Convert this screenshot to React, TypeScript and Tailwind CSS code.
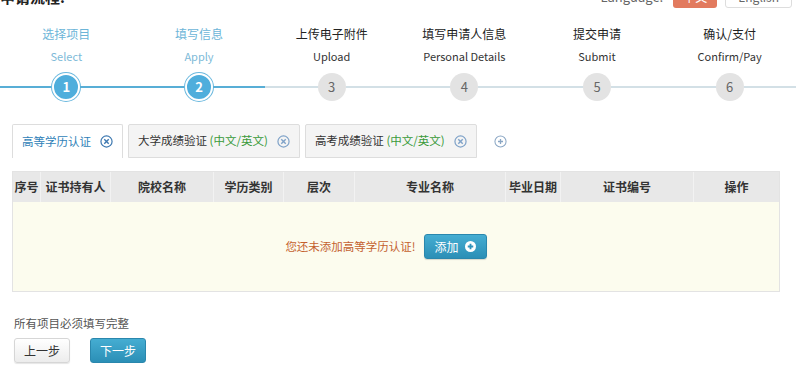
import React from 'react';

const steps = [
  { cn: '选择项目', en: 'Select', done: true },
  { cn: '填写信息', en: 'Apply', done: true },
  { cn: '上传电子附件', en: 'Upload', done: false },
  { cn: '填写申请人信息', en: 'Personal Details', done: false },
  { cn: '提交申请', en: 'Submit', done: false },
  { cn: '确认/支付', en: 'Confirm/Pay', done: false },
];

const columns = [
  { label: '序号', w: 'w-[28px]' },
  { label: '证书持有人', w: 'w-[70px]' },
  { label: '院校名称', w: 'w-[103px]' },
  { label: '学历类别', w: 'w-[70px]' },
  { label: '层次', w: 'w-[71px]' },
  { label: '专业名称', w: 'w-[151px]' },
  { label: '毕业日期', w: 'w-[55px]' },
  { label: '证书编号', w: 'w-[133px]' },
  { label: '操作', w: 'flex-1' },
];

function CloseIcon({ color }: { color: string }) {
  return (
    <svg width="13" height="13" viewBox="0 0 14 14" className="shrink-0">
      <circle cx="7" cy="7" r="6" fill="none" stroke={color} strokeWidth="1.3" />
      <path d="M4.6 4.6 L9.4 9.4 M9.4 4.6 L4.6 9.4" stroke={color} strokeWidth="1.5" />
    </svg>
  );
}

function Tab({ title, sub, active }: { title: string; sub?: string; active?: boolean }) {
  return (
    <div
      className={
        active
          ? 'h-[34px] flex items-center gap-[9px] px-[9px] border border-b-0 border-[#dddddd] bg-white rounded-t-[2px]'
          : 'h-[34px] flex items-center gap-[9px] px-[9px] border border-[#dddddd] bg-[#f4f4f4] rounded-t-[2px]'
      }
    >
      <span className={active ? 'text-[#2f7fb8] whitespace-nowrap' : 'text-[#333] whitespace-nowrap'}>
        {title}
        {sub && <span className="text-[#3a9a3a]"> ({sub})</span>}
      </span>
      <CloseIcon color={active ? '#3d78b0' : '#7fa2c8'} />
    </div>
  );
}

export default function App() {
  return (
    <div className="w-[800px] h-[379px] overflow-hidden bg-white text-[11.5px] text-[#333] font-['Noto_Sans_CJK_SC','Noto_Sans',sans-serif]">
      <div className="-mt-[14px]">
        {/* top bar */}
        <div className="h-[22px] flex items-center justify-between pr-[8px]">
          <div className="text-[15px] font-bold text-[#222]">申请流程:</div>
          <div className="flex items-center gap-[8px]">
            <span className="text-[#666] text-[13px] mr-[2px]">Language:</span>
            <span className="px-[10px] h-[22px] flex items-center rounded-[3px] bg-[#e27a5e] text-white text-[12px]">中文</span>
            <span className="px-[12px] h-[22px] flex items-center rounded-[3px] border border-[#dddddd] text-[#666] text-[12px]">English</span>
          </div>
        </div>

        {/* steps */}
        <div className="grid grid-cols-6 mt-[16px] mr-[4px]">
          {steps.map((s, i) => {
            const blue = i <= 1;
            return (
              <div key={s.cn} className="flex flex-col items-center">
                <div className={s.done ? 'text-[#6cb5d8] text-[12px] h-[20px] leading-[20px]' : 'text-[#222] text-[12px] h-[20px] leading-[20px]'}>{s.cn}</div>
                <div className={s.done ? 'text-[#7dbad8] text-[11px] h-[18px] leading-[18px] mt-[3px]' : 'text-[#333] text-[11px] h-[18px] leading-[18px] mt-[3px]'}>{s.en}</div>
                <div className="w-full flex items-center mt-[8px]">
                  <div className={blue ? 'flex-1 h-[2px] bg-[#58aed6]' : 'flex-1 h-[2px] bg-[#d3e0e6]'} />
                  {s.done ? (
                    <div className="w-[28px] h-[28px] rounded-full bg-[#4faedc] border-2 border-white ring-1 ring-[#6ab8de] flex items-center justify-center text-white text-[13px] font-semibold">
                      {i + 1}
                    </div>
                  ) : (
                    <div className="w-[28px] h-[28px] rounded-full bg-[#e3e3e3] flex items-center justify-center text-[#666] text-[13px]">
                      {i + 1}
                    </div>
                  )}
                  <div className={blue ? 'flex-1 h-[2px] bg-[#58aed6]' : 'flex-1 h-[2px] bg-[#d3e0e6]'} />
                </div>
              </div>
            );
          })}
        </div>

        {/* tabs */}
        <div className="flex items-center gap-[5px] pl-[12px] mt-[23px] text-[11.5px]">
          <Tab title="高等学历认证" active />
          <Tab title="大学成绩验证" sub="中文/英文" />
          <Tab title="高考成绩验证" sub="中文/英文" />
          <svg width="13" height="13" viewBox="0 0 14 14" className="ml-[12px]">
            <circle cx="7" cy="7" r="6" fill="none" stroke="#8aa6c4" strokeWidth="1.1" />
            <path d="M7 4.3 V9.7 M4.3 7 H9.7" stroke="#8aa6c4" strokeWidth="1.4" />
          </svg>
        </div>

        {/* table */}
        <div className="ml-[12px] mr-[20px] mt-[13px] border border-[#e3e3e3]">
          <div className="flex h-[30px] bg-[#e8e8e8] font-semibold text-[#333] text-[12px]">
            {columns.map((c, i) => (
              <div
                key={c.label}
                className={
                  i < columns.length - 1
                    ? `${c.w} flex items-center justify-center border-r border-[#f2f2f2] whitespace-nowrap`
                    : `${c.w} flex items-center justify-center whitespace-nowrap`
                }
              >
                {c.label}
              </div>
            ))}
          </div>
          <div className="h-[89px] bg-[#fcfcee] flex items-center justify-center pr-[20px] gap-[8px]">
            <span className="text-[#c4612e] text-[11.5px]">您还未添加高等学历认证!</span>
            <button className="h-[25px] px-[10px] rounded-[3px] bg-gradient-to-b from-[#45add2] to-[#2b8fb6] border border-[#2a87ad] text-white text-[12px] flex items-center gap-[6px] shadow-[0_1px_1px_rgba(0,0,0,0.15)]">
              <span>添加</span>
              <svg width="11" height="11" viewBox="0 0 12 12">
                <circle cx="6" cy="6" r="6" fill="white" />
                <path d="M6 3 V9 M3 6 H9" stroke="#2f93bb" strokeWidth="2" />
              </svg>
            </button>
          </div>
        </div>

        {/* footer */}
        <div className="pl-[14px] mt-[23px] text-[#555]">所有项目必须填写完整</div>
        <div className="flex items-center gap-[20px] pl-[14px] mt-[6px]">
          <button className="w-[56px] h-[25px] rounded-[3px] border border-[#d6d6d6] bg-gradient-to-b from-white to-[#ececec] text-[#333] text-[12px] shadow-[0_1px_1px_rgba(0,0,0,0.1)]">
            上一步
          </button>
          <button className="w-[56px] h-[25px] rounded-[3px] border border-[#2a87ad] bg-gradient-to-b from-[#45add2] to-[#2b8fb6] text-white text-[12px]">
            下一步
          </button>
        </div>
      </div>
    </div>
  );
}
